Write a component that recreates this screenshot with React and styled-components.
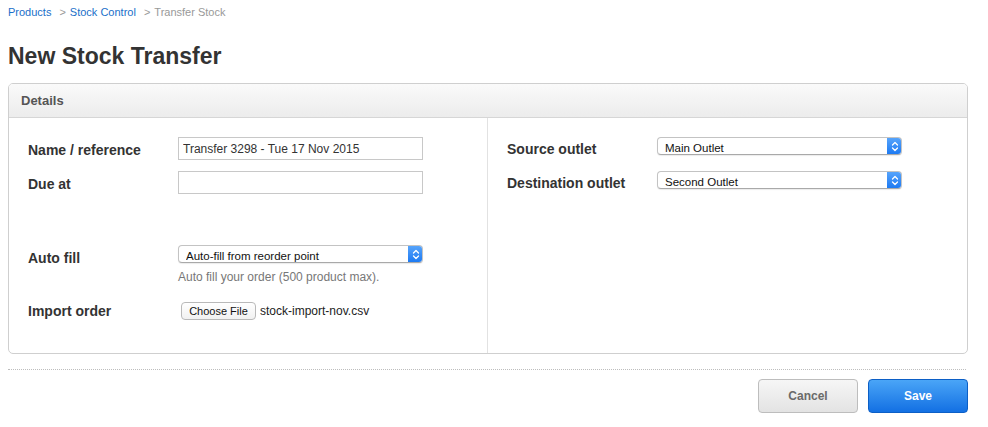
import React from "react";
import styled, { createGlobalStyle } from "styled-components";

const Global = createGlobalStyle`
  html, body { margin: 0; padding: 0; background: #fff; }
  body { font-family: "Liberation Sans", Arial, Helvetica, sans-serif; color: #333; }
  * { box-sizing: border-box; }
`;

const Page = styled.div`
  padding: 0 20px 0 8px;
  width: 988px;
`;

const Crumbs = styled.nav`
  display: flex;
  align-items: center;
  gap: 8px;
  font-size: 11px;
  line-height: 14px;
  padding-top: 5px;
  height: 19px;
`;

const Crumb = styled.a`
  color: ${(p) => (p.$current ? "#999" : "#1a6fc9")};
  text-decoration: none;
`;

const Sep = styled.span`
  color: #999;
  margin-right: -4px;
`;

const Title = styled.h1`
  margin: 0;
  padding-top: 23px;
  font-size: 23px;
  line-height: 28px;
  font-weight: bold;
  color: #333;
  height: 64px;
`;

const Panel = styled.section`
  border: 1px solid #cfcfcf;
  border-radius: 5px;
  overflow: hidden;
`;

const PanelHeader = styled.header`
  height: 34px;
  display: flex;
  align-items: center;
  padding-left: 12px;
  background: linear-gradient(#fafafa, #ececec);
  border-bottom: 1px solid #d6d6d6;
  font-size: 13px;
  font-weight: bold;
  color: #555;
`;

const PanelBody = styled.div`
  display: grid;
  grid-template-columns: 479px 1fr;
  height: 235px;
`;

const Column = styled.div`
  padding: 19px 0 0 19px;
  border-right: ${(p) => (p.$divider ? "1px solid #e2e2e2" : "none")};
  display: flex;
  flex-direction: column;
`;

const Row = styled.div`
  display: grid;
  grid-template-columns: 150px 245px;
  align-items: ${(p) => p.$align || "center"};
  margin-top: ${(p) => p.$mt || 0}px;
  min-height: ${(p) => p.$h || 23}px;
`;

const Label = styled.label`
  font-size: 14px;
  font-weight: bold;
  color: #333;
  padding-top: ${(p) => p.$pt || 0}px;
`;

const TextInput = styled.input`
  width: 245px;
  height: 23px;
  border: 1px solid #c8c8c8;
  padding: 0 4px;
  font-family: "Liberation Sans", Arial, sans-serif;
  font-size: 12px;
  color: #333;
  outline: none;
`;

const SelectWrap = styled.div`
  position: relative;
  width: 245px;
  height: 18px;
  border: 1px solid #c3c3c3;
  border-bottom-color: #a9a9a9;
  border-radius: 4px;
  background: #fff;
  box-shadow: 0 1px 1px rgba(0, 0, 0, 0.08);
  overflow: hidden;
`;

const NativeSelect = styled.select`
  appearance: none;
  -webkit-appearance: none;
  border: none;
  background: transparent;
  width: 100%;
  height: 100%;
  padding: 0 20px 0 7px;
  font-family: "Liberation Sans", Arial, sans-serif;
  font-size: 11.5px;
  color: #111;
  outline: none;
`;

const SelectArrow = styled.span`
  position: absolute;
  top: -1px;
  right: -1px;
  bottom: -1px;
  width: 15px;
  border-radius: 0 4px 4px 0;
  background: linear-gradient(#5aa6fb, #1a78f2);
  display: flex;
  align-items: center;
  justify-content: center;
  pointer-events: none;
`;

const Help = styled.div`
  font-size: 12px;
  color: #777;
  margin: 4px 0 0 150px;
  line-height: 14px;
`;

const FileRow = styled.div`
  display: flex;
  align-items: center;
  gap: 4px;
  padding-left: 3px;
`;

const FileButton = styled.button`
  height: 18px;
  width: 75px;
  padding: 0;
  border: 1px solid #b9b9b9;
  border-radius: 4px;
  background: linear-gradient(#ffffff, #f1f1f1);
  font-family: "Liberation Sans", Arial, sans-serif;
  font-size: 11px;
  color: #111;
`;

const FileName = styled.span`
  font-size: 12px;
  color: #222;
`;

const Divider = styled.hr`
  margin: 15px 2px 0 0;
  border: none;
  border-top: 1px dotted #bdbdbd;
  height: 0;
`;

const Actions = styled.div`
  display: flex;
  justify-content: flex-end;
  gap: 10px;
  margin-top: 9px;
`;

const Button = styled.button`
  width: 100px;
  height: 34px;
  border-radius: 4px;
  font-family: "Liberation Sans", Arial, sans-serif;
  font-size: 12px;
  font-weight: bold;
  border: 1px solid ${(p) => (p.$primary ? "#0c5fc6" : "#bdbdbd")};
  color: ${(p) => (p.$primary ? "#fff" : "#6a6a6a")};
  background: ${(p) =>
    p.$primary
      ? "linear-gradient(#4aa5f7, #1370e3)"
      : "linear-gradient(#f6f6f6, #e3e3e3)"};
`;

const Chevrons = () => (
  <svg width="8" height="11" viewBox="0 0 8 11" fill="none">
    <path d="M1.5 4 L4 1.5 L6.5 4" stroke="#fff" strokeWidth="1.3" strokeLinecap="round" strokeLinejoin="round" />
    <path d="M1.5 7 L4 9.5 L6.5 7" stroke="#fff" strokeWidth="1.3" strokeLinecap="round" strokeLinejoin="round" />
  </svg>
);

const Select = ({ value }) => (
  <SelectWrap>
    <NativeSelect defaultValue={value}>
      <option>{value}</option>
    </NativeSelect>
    <SelectArrow>
      <Chevrons />
    </SelectArrow>
  </SelectWrap>
);

export default function App() {
  return (
    <Page>
      <Global />
      <Crumbs>
        <Crumb href="#">Products</Crumb>
        <Sep>&gt;</Sep>
        <Crumb href="#">Stock Control</Crumb>
        <Sep>&gt;</Sep>
        <Crumb $current>Transfer Stock</Crumb>
      </Crumbs>
      <Title>New Stock Transfer</Title>
      <Panel>
        <PanelHeader>Details</PanelHeader>
        <PanelBody>
          <Column $divider>
            <Row>
              <Label $pt={2}>Name / reference</Label>
              <TextInput defaultValue="Transfer 3298 - Tue 17 Nov 2015" />
            </Row>
            <Row $mt={11}>
              <Label $pt={2}>Due at</Label>
              <TextInput />
            </Row>
            <Row $mt={51} $align="start" $h={18}>
              <Label $pt={5}>Auto fill</Label>
              <Select value="Auto-fill from reorder point" />
            </Row>
            <Help>Auto fill your order (500 product max).</Help>
            <Row $mt={18} $h={18}>
              <Label>Import order</Label>
              <FileRow>
                <FileButton>Choose File</FileButton>
                <FileName>stock-import-nov.csv</FileName>
              </FileRow>
            </Row>
          </Column>
          <Column>
            <Row $align="start" $h={18}>
              <Label $pt={4}>Source outlet</Label>
              <Select value="Main Outlet" />
            </Row>
            <Row $mt={14} $align="start" $h={18}>
              <Label $pt={4}>Destination outlet</Label>
              <Select value="Second Outlet" />
            </Row>
          </Column>
        </PanelBody>
      </Panel>
      <Divider />
      <Actions>
        <Button>Cancel</Button>
        <Button $primary>Save</Button>
      </Actions>
    </Page>
  );
}
